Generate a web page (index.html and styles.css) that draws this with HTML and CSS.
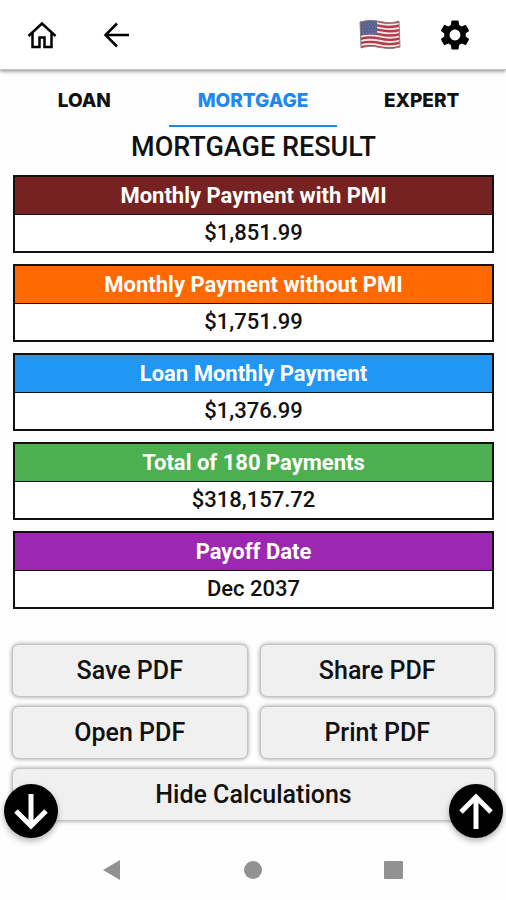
FILE: index.html
```html
<!DOCTYPE html>
<html lang="en">
<head>
<meta charset="utf-8">
<meta name="viewport" content="width=device-width, initial-scale=1">
<title>Mortgage Result</title>
<link rel="stylesheet" href="styles.css">
</head>
<body>
<header class="topbar">
  <div class="group">
    <button class="icon-button" type="button" aria-label="Home">
      <svg width="34" height="34" viewBox="0 0 34 34"><path class="line" d="M3.500 18L17 5.500L30.500 18M7.500 15V29H14.500V19.500H19.500V29H26.500V15"/></svg>
    </button>
    <button class="icon-button" type="button" aria-label="Back">
      <svg width="36" height="36" viewBox="0 0 36 36"><path class="line" d="M30 18H7M18 6.500L6.500 18L18 29.500"/></svg>
    </button>
  </div>
  <div class="group">
    <button class="icon-button" type="button" aria-label="Country: United States">
      <svg width="42" height="32" viewBox="0 0 42 32">
        <defs><clipPath id="flag"><path d="M1 3Q10 0 21 2.500T40 2L41 28Q32 31 21 28.500T2 29Z"/></clipPath></defs>
        <g clip-path="url(#flag)">
          <path d="M0 0H42V32H0Z" fill="#f1e6e6"/>
          <g fill="none" stroke="#b83a4a" stroke-width="2.400">
            <path d="M0 3Q10 0 21 2.500T42 2"/>
            <path d="M0 7.300Q10 4.300 21 6.800T42 6.300"/>
            <path d="M0 11.600Q10 8.600 21 11.100T42 10.600"/>
            <path d="M0 15.900Q10 12.900 21 15.400T42 14.900"/>
            <path d="M0 20.200Q10 17.200 21 19.700T42 19.200"/>
            <path d="M0 24.500Q10 21.500 21 24T42 23.500"/>
            <path d="M0 28.800Q10 25.800 21 28.300T42 27.800"/>
          </g>
          <path d="M0 0H18V16Q10 14 0 17Z" fill="#59628f"/>
          <g fill="none" stroke="#7e86aa" stroke-width="1" stroke-dasharray="1 2">
            <path d="M3 5H17M4 8H17M3 11H17M4 14H17"/>
          </g>
        </g>
        <path d="M1 3Q10 0 21 2.500T40 2L41 28Q32 31 21 28.500T2 29Z" fill="none" stroke="#8c7f80" stroke-width="1"/>
      </svg>
    </button>
    <button class="icon-button" type="button" aria-label="Settings">
      <svg width="36" height="36" viewBox="0 0 24 24"><path d="M19.140 12.940c.04-.3.06-.61.06-.94 0-.32-.02-.64-.07-.94l2.030-1.580c.18-.14.23-.41.12-.61l-1.920-3.320c-.12-.22-.37-.29-.59-.22l-2.390.96c-.5-.38-1.030-.7-1.620-.94l-.36-2.540c-.04-.24-.24-.41-.48-.41h-3.840c-.24 0-.43.17-.47.41l-.36 2.540c-.59.24-1.130.57-1.620.94l-2.390-.96c-.22-.08-.47 0-.59.22L2.740 8.870c-.12.21-.08.47.12.61l2.030 1.580c-.05.3-.09.63-.09.94s.02.64.07.94l-2.030 1.580c-.18.14-.23.41-.12.61l1.920 3.320c.12.22.37.29.59.22l2.390-.96c.5.38 1.030.7 1.620.94l.36 2.540c.05.24.24.41.48.41h3.840c.24 0 .44-.17.47-.41l.36-2.540c.59-.24 1.130-.56 1.620-.94l2.390.96c.22.08.47 0 .59-.22l1.920-3.320c.12-.22.07-.47-.12-.61l-2.010-1.580zM12 15.600c-1.980 0-3.600-1.620-3.600-3.600s1.620-3.600 3.600-3.600 3.600 1.620 3.600 3.600-1.620 3.600-3.600 3.600z"/></svg>
    </button>
  </div>
</header>
<nav class="tabs">
  <a class="tab" href="#loan">LOAN</a>
  <a class="tab active" href="#mortgage" aria-current="page">MORTGAGE</a>
  <a class="tab" href="#expert">EXPERT</a>
</nav>
<main class="content">
  <h1 class="title">MORTGAGE RESULT</h1>
  <dl class="results">
    <div class="card"><dt class="label maroon">Monthly Payment with PMI</dt><dd class="value">$1,851.99</dd></div>
    <div class="card"><dt class="label orange">Monthly Payment without PMI</dt><dd class="value">$1,751.99</dd></div>
    <div class="card"><dt class="label blue">Loan Monthly Payment</dt><dd class="value">$1,376.99</dd></div>
    <div class="card"><dt class="label green">Total of 180 Payments</dt><dd class="value">$318,157.72</dd></div>
    <div class="card"><dt class="label purple">Payoff Date</dt><dd class="value">Dec 2037</dd></div>
  </dl>
  <div class="actions">
    <button class="action" type="button">Save PDF</button>
    <button class="action" type="button">Share PDF</button>
    <button class="action" type="button">Open PDF</button>
    <button class="action" type="button">Print PDF</button>
    <button class="action wide" type="button">Hide Calculations</button>
  </div>
  <button class="scroll down" type="button" aria-label="Scroll down">
    <svg width="54" height="54" viewBox="0 0 54 54"><path d="M27 10V42M12 27L27 42L42 27"/></svg>
  </button>
  <button class="scroll up" type="button" aria-label="Scroll up">
    <svg width="54" height="54" viewBox="0 0 54 54"><path d="M27 45V13M12 28L27 13L42 28"/></svg>
  </button>
</main>
<footer class="system">
  <button class="icon-button" type="button" aria-label="System back"><svg width="20" height="20" viewBox="0 0 20 20"><path d="M0 10L17 0V20Z"/></svg></button>
  <button class="icon-button" type="button" aria-label="System home"><svg width="20" height="20" viewBox="0 0 20 20"><circle cx="10" cy="10" r="9"/></svg></button>
  <button class="icon-button" type="button" aria-label="Recent apps"><svg width="20" height="20" viewBox="0 0 20 20"><rect x="1" y="1" width="19" height="18" rx="1"/></svg></button>
</footer>
</body>
</html>
```
FILE: styles.css
```css
* {
  box-sizing: border-box;
}

body {
  margin: 0;
  background: #fefefe;
  color: #111;
  font-family: Roboto, "Liberation Sans", sans-serif;
  font-weight: 500;
}

button {
  border: 0;
  padding: 0;
  font: inherit;
  color: inherit;
}

svg {
  display: block;
}

.icon-button {
  background: none;
}

.line {
  fill: none;
  stroke: #000;
  stroke-width: 2.5;
}

.topbar {
  display: flex;
  align-items: center;
  justify-content: space-between;
  height: 70px;
  padding: 0 33px 0 25px;
  background: #fff;
  border-bottom: 1px solid #c4c4c4;
  box-shadow: 0 1px 4px rgba(0, 0, 0, 0.5);
}

.group {
  display: flex;
  align-items: center;
  gap: 36px;
}

.group:first-child {
  gap: 40px;
}

.tabs {
  display: grid;
  grid-template-columns: repeat(3, 1fr);
}

.tab {
  padding: 16px 0 10px;
  border-bottom: 2px solid transparent;
  font: 800 19px/29px Inter, sans-serif;
  color: #111;
  text-align: center;
  text-decoration: none;
}

.tab.active {
  color: #1e88f0;
  border-color: #1e88e5;
}

.content {
  position: relative;
  padding: 0 11px 19px 12px;
}

.title {
  margin: 0;
  padding: 4px 0 12px;
  font-size: 27px;
  font-weight: 500;
  line-height: 32px;
  text-align: center;
}

.results {
  display: grid;
  gap: 11px;
  margin: 0 1px 35px;
}

.card {
  border: 2px solid #111;
  background: #fff;
  text-align: center;
}

.label {
  border-bottom: 1px solid #111;
  color: #fff;
  font-size: 22px;
  font-weight: 700;
  line-height: 37px;
}

.value {
  margin: 0;
  font-size: 22px;
  line-height: 36px;
}

.maroon { background: #772222; }
.orange { background: #ff6900; }
.blue { background: #2196f3; }
.green { background: #4caf50; }
.purple { background: #9c27b0; }

.actions {
  display: grid;
  grid-template-columns: 1fr 1fr;
  gap: 9px 12px;
}

.action {
  height: 53px;
  border: 1px solid #c4c4c4;
  border-radius: 7px;
  background: #f0f0f0;
  box-shadow: 0 0 4px rgba(0, 0, 0, 0.4);
  font-size: 25px;
}

.wide {
  grid-column: 1 / -1;
}

.scroll {
  position: absolute;
  bottom: 2px;
  border-radius: 50%;
  background: #000;
  box-shadow: 0 3px 6px rgba(0, 0, 0, 0.3);
}

.scroll path {
  fill: none;
  stroke: #fff;
  stroke-width: 5;
}

.down { left: 4px; }
.up { right: 3px; }

.system {
  display: flex;
  justify-content: center;
  gap: 120px;
  padding: 20px 0;
  fill: #929292;
}
```
